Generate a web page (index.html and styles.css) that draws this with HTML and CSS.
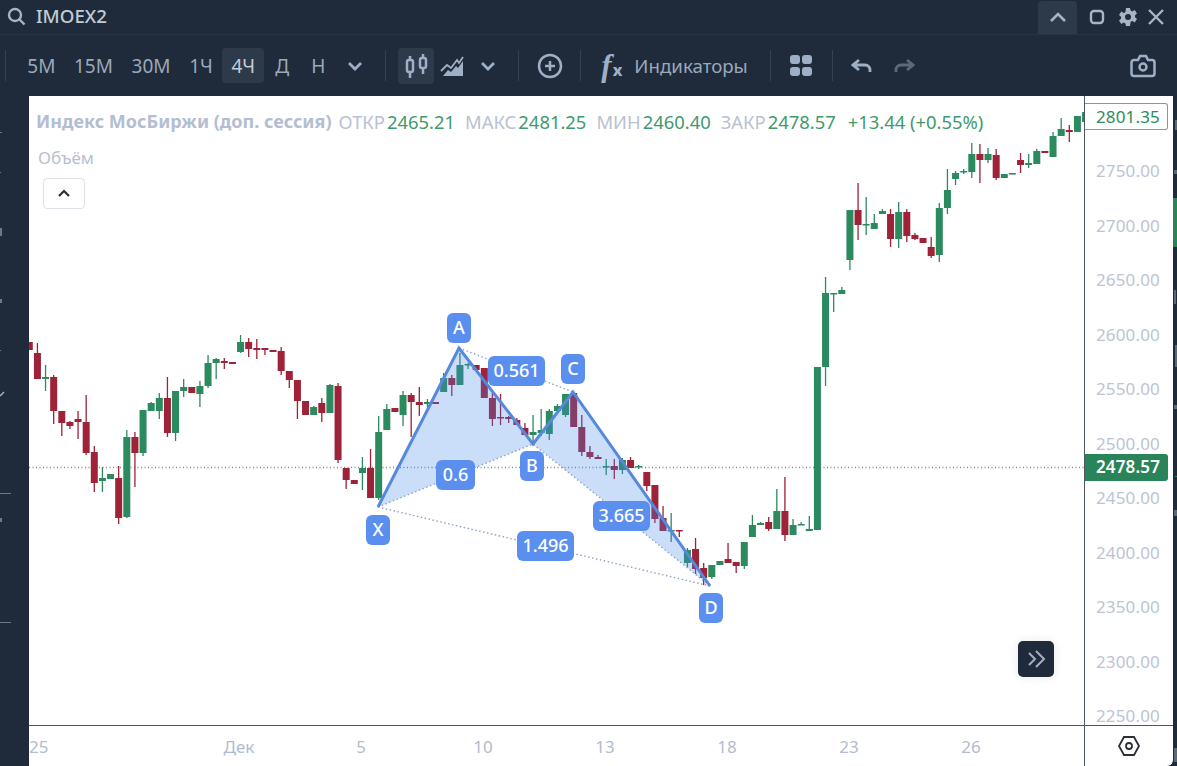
FILE: index.html
```html
<!DOCTYPE html>
<html lang="ru">
<head>
  <meta charset="UTF-8">
  <title>IMOEX2</title>
  <link rel="stylesheet" href="styles.css">
</head>
<body>
  <header class="topbar">
    <svg class="search-icon" width="20" height="20" viewBox="0 0 20 20"><circle cx="8" cy="8" r="6" /><path d="M12.500 12.500l5 5" /></svg>
    <span class="ticker">IMOEX2</span>
    <div class="window-btns">
      <button class="collapse-tab"><svg width="18" height="12" viewBox="0 0 18 12"><path d="M2 10l7-7 7 7" /></svg></button>
      <svg class="win-icon win-square" width="16" height="16" viewBox="0 0 16 16"><rect x="2" y="2" width="12" height="12" rx="3" /></svg>
      <svg class="win-gear" width="20" height="20" viewBox="0 0 20 20"><path class="gear-teeth" d="M8 1h4l.6 2.6 1.8.8L16.700 3l2.300 3.400-2 1.800v2l2 1.800-2.300 3.400-2.300-1.400-1.800.8L12 19H8l-.6-2.600-1.800-.8L3.300 17 1 13.600l2-1.800v-2L1 8l2.300-3.400 2.300 1.400 1.800-.8z" /><circle class="gear-hole" cx="10" cy="10" r="3" /></svg>
      <svg class="win-icon win-close" width="18" height="18" viewBox="0 0 18 18"><path d="M2 2l14 14M16 2L2 16" /></svg>
    </div>
  </header>

  <nav class="toolbar">
    <span class="sep sep-first"></span>
    <div class="timeframes">
      <button class="tf">5M</button>
      <button class="tf">15M</button>
      <button class="tf">30M</button>
      <button class="tf">1Ч</button>
      <button class="tf active">4Ч</button>
      <button class="tf tf-wide">Д</button>
      <button class="tf tf-wide">Н</button>
    </div>
    <button class="icon-btn chevron-btn"><svg width="16" height="10" viewBox="0 0 16 10"><path d="M2 2l6 6 6-6" /></svg></button>
    <span class="sep"></span>
    <button class="icon-btn chart-type active">
      <svg width="28" height="32" viewBox="0 0 28 32"><path d="M8 6v4M8 22v6M21 4v4M21 18v6" /><rect x="5" y="10" width="6" height="12" rx="2" /><rect x="18" y="8" width="6" height="10" rx="2" /></svg>
    </button>
    <button class="icon-btn area-btn">
      <svg width="24" height="22" viewBox="0 0 24 22"><path class="area-fill" d="M3 21l5-6 3 2 5-6 2 2 5-7v15z" /><path class="area-stroke" d="M1 16l6-6 4 3 6-8 2 3 4-6" /></svg>
    </button>
    <button class="icon-btn chevron-btn"><svg width="16" height="10" viewBox="0 0 16 10"><path d="M2 2l6 6 6-6" /></svg></button>
    <span class="sep"></span>
    <button class="icon-btn plus-btn"><svg width="26" height="26" viewBox="0 0 26 26"><circle cx="13" cy="13" r="11" /><path d="M13 8v10M8 13h10" /></svg></button>
    <span class="sep"></span>
    <button class="indicators"><span class="fx"><i>f</i><b>x</b></span><span>Индикаторы</span></button>
    <span class="sep"></span>
    <button class="icon-btn layout-btn"><span class="squares"><i></i><i></i><i></i><i></i></span></button>
    <span class="sep"></span>
    <button class="icon-btn undo-btn"><svg width="22" height="16" viewBox="0 0 22 16"><path d="M8 2L2 7l6 5M2 7h12c3 0 5 2 5 5v2" /></svg></button>
    <button class="icon-btn redo-btn"><svg width="22" height="16" viewBox="0 0 22 16"><path d="M14 2l6 5-6 5M20 7H8c-3 0-5 2-5 5v2" /></svg></button>
    <button class="icon-btn camera-btn"><svg width="26" height="24" viewBox="0 0 26 24"><path d="M4 6h4l2-4h6l2 4h4a2.500 2.500 0 0 1 2.500 2.500v11A2.500 2.500 0 0 1 22 22H4a2.500 2.500 0 0 1-2.500-2.500v-11A2.500 2.500 0 0 1 4 6z" /><circle cx="13" cy="13" r="3.500" /></svg></button>
  </nav>

  <main class="workspace">
    <svg class="left-strip" width="29" height="670" viewBox="0 96 29 670">
      <rect x="0" y="132" width="2" height="1" />
      <rect x="0" y="172" width="1" height="1" />
      <rect x="0" y="228" width="2" height="8" />
      <rect x="0" y="299" width="2" height="4" />
      <rect x="0" y="350" width="1" height="1" />
      <path d="M0 396l4-4" />
      <rect x="0" y="493" width="11" height="1" />
      <rect x="0" y="518" width="2" height="4" />
      <rect x="0" y="622" width="11" height="1" />
    </svg>

    <section class="chart-panel">
      <div class="chart-row">
        <div class="plot">
          <svg class="plot-svg" width="1055" height="629" viewBox="29 96 1055 629">
            <line class="last-line" x1="29" y1="467.500" x2="1084" y2="467.500" />
            <g id="candles"></g>
            <path class="pattern-fill" d="M378 507L459 348L533 444Z" />
            <path class="pattern-fill" d="M533 444L573 392L710 586Z" />
            <path class="pattern-dots" d="M378 507L533 444L710 586M459 348L573 392M378 507L710 586" />
            <path class="pattern-line" d="M378 507L459 348L533 444L573 392L710 586" />
            <g class="pattern-label">
              <rect x="447" y="313" width="24" height="30" rx="6" /><text x="459" y="334">A</text>
              <rect x="561" y="354" width="24" height="30" rx="6" /><text x="573" y="375">C</text>
              <rect x="520" y="451" width="24" height="30" rx="6" /><text x="532" y="472">B</text>
              <rect x="366" y="515" width="24" height="30" rx="6" /><text x="378" y="536">X</text>
              <rect x="699" y="593" width="24" height="30" rx="6" /><text x="711" y="614">D</text>
              <rect x="488" y="356" width="57" height="30" rx="6" /><text x="516.500" y="377">0.561</text>
              <rect x="436" y="460" width="39" height="30" rx="6" /><text x="455.500" y="481">0.6</text>
              <rect x="517" y="531" width="57" height="30" rx="6" /><text x="545.500" y="552">1.496</text>
              <rect x="593" y="501" width="57" height="30" rx="6" /><text x="621.500" y="522">3.665</text>
            </g>
          </svg>

          <div class="legend">
            <div class="legend-line">
              <span class="legend-title">Индекс МосБиржи (доп. сессия)</span>
              <span class="ohlc"><span>ОТКР</span><b>2465.21</b></span>
              <span class="ohlc"><span>МАКС</span><b>2481.25</b></span>
              <span class="ohlc"><span>МИН</span><b>2460.40</b></span>
              <span class="ohlc"><span>ЗАКР</span><b>2478.57</b></span>
              <b class="change">+13.44 (+0.55%)</b>
            </div>
            <div class="legend-volume">Объём</div>
            <button class="legend-toggle"><svg width="14" height="9" viewBox="0 0 14 9"><path d="M2 7l5-5 5 5" /></svg></button>
          </div>

          <button class="scroll-end"><svg width="20" height="18" viewBox="0 0 20 18"><path d="M3 3l6 6-6 6M10 1l8 8-8 8" /></svg></button>
        </div>

        <div class="price-axis">
          <span>2750.00</span>
          <span>2700.00</span>
          <span>2650.00</span>
          <span>2600.00</span>
          <span>2550.00</span>
          <span>2500.00</span>
          <span>2450.00</span>
          <span>2400.00</span>
          <span>2350.00</span>
          <span>2300.00</span>
          <span>2250.00</span>
          <div class="price-tag tag-high">2801.35</div>
          <div class="price-tag tag-last">2478.57</div>
        </div>
      </div>

      <div class="axis-row">
        <div class="time-axis">
          <span class="tick-first">25</span>
          <span class="tick">Дек</span>
          <span class="tick">5</span>
          <span class="tick">10</span>
          <span class="tick">13</span>
          <span class="tick">18</span>
          <span class="tick">23</span>
          <span class="tick">26</span>
        </div>
        <div class="axis-corner"><svg width="24" height="22" viewBox="0 0 24 22"><path d="M7 2h10l5 9-5 9H7l-5-9z" /><circle cx="12" cy="11" r="3" /></svg></div>
      </div>
    </section>

    <svg class="right-strip" width="4" height="670" viewBox="1173 96 4 670">
      <rect class="bit-green" x="1173" y="198" width="4" height="49" />
      <rect class="bit-grey" x="1175" y="120" width="2" height="10" />
      <rect class="bit-grey" x="1174" y="170" width="3" height="4" />
      <rect class="bit-grey" x="1174" y="290" width="2" height="14" />
      <rect class="bit-grey" x="1175" y="345" width="2" height="22" />
      <rect class="bit-grey" x="1174" y="405" width="3" height="4" />
      <rect class="bit-green" x="1175" y="476" width="2" height="1" />
      <rect class="bit-grey" x="1174" y="510" width="3" height="6" />
      <rect class="bit-grey" x="1174" y="748" width="3" height="14" />
    </svg>
  </main>

  <script>
    // [colour, high, body top, body bottom, low], one per bar
    const bars = [
      ['r',342,342,350,350],['r',343,353,379,379],['g',365,377,379,391],['r',375,377,411,424],
      ['r',411,411,423,436],['r',421,422,426,429],['r',411,419,422,439],['r',395,422,453,455],
      ['r',446,452,483,492],['g',467,478,481,492],['g',474,474,479,479],['r',466,478,518,524],
      ['g',430,437,517,518],['r',432,437,453,487],['g',410,410,453,456],['g',402,403,411,411],
      ['g',393,398,411,419],['r',377,398,433,437],['g',391,391,433,441],['g',379,387,391,397],
      ['r',387,387,393,393],['g',381,386,394,407],['g',355,363,386,388],['g',358,359,363,379],
      ['r',358,361,363,369],['r',362,362,364,364],['g',335,342,352,353],['r',338,342,349,357],
      ['r',339,348,350,359],['r',348,348,350,355],['r',350,350,352,352],['r',347,351,371,375],
      ['r',371,371,380,388],['r',380,380,401,419],['r',401,401,415,415],['g',406,407,415,415],
      ['r',398,403,413,422],['g',384,385,413,413],['r',383,386,460,463],['r',468,468,480,489],
      ['r',480,480,484,484],['g',457,468,473,490],['r',449,468,498,498],['g',416,432,498,500],
      ['g',404,409,430,430],['r',408,408,412,412],['g',391,395,415,426],['r',393,395,402,437],
      ['r',387,402,405,416],['g',399,402,404,407],['r',402,402,404,404],['g',373,378,392,392],
      ['r',375,378,385,396],['g',353,365,385,385],['g',363,364,365,369],['r',365,365,370,370],
      ['r',368,368,398,398],['r',393,398,419,426],['r',394,417,418,425],['r',416,417,419,423],
      ['r',418,420,425,425],['r',423,428,435,435],['g',415,432,435,443],['g',409,430,433,436],
      ['g',409,411,434,440],['g',404,406,411,411],['g',394,394,415,417],['r',392,393,427,427],
      ['r',415,427,452,456],['r',446,452,457,459],['r',455,457,459,459],['g',459,466,467,475],
      ['r',459,466,470,479],['g',458,460,470,474],['r',457,460,468,468],['g',465,466,467,469],
      ['r',472,472,486,491],['r',485,485,519,523],['r',506,518,531,531],['g',513,530,531,542],
      ['r',530,530,531,537],['g',548,550,563,567],['r',538,549,569,574],['r',563,568,578,585],
      ['g',565,565,577,579],['g',561,561,565,565],['r',543,559,563,563],['r',562,562,566,573],
      ['g',542,542,566,569],['g',515,525,537,537],['g',522,523,525,525],['r',517,522,529,531],
      ['g',489,511,529,529],['r',477,511,535,541],['g',519,525,535,535],['g',522,524,525,525],
      ['g',516,529,531,531],['g',367,367,530,530],['g',277,293,367,386],['g',293,293,294,312],
      ['g',287,290,294,294],['g',210,210,260,270],['r',183,210,225,240],['g',197,224,225,235],
      ['g',214,223,229,229],['g',209,211,214,214],['r',209,214,239,247],['g',202,212,239,248],
      ['r',209,212,236,242],['r',233,235,239,240],['r',238,238,243,243],['r',237,247,256,258],
      ['g',203,208,255,262],['g',169,190,208,214],['g',171,173,179,185],['g',169,171,172,174],
      ['g',143,154,172,178],['r',144,154,160,183],['g',148,154,160,163],['r',149,155,178,180],
      ['g',174,174,178,178],['g',173,173,174,174],['r',153,160,165,173],['g',154,163,165,168],
      ['g',149,151,164,164],['r',151,151,153,153],['g',132,136,157,157],['g',118,129,136,136],
      ['r',125,130,132,142],['g',116,116,132,132],['g',112,112,122,122]
    ];

    const NS = 'http://www.w3.org/2000/svg';
    const group = document.getElementById('candles');

    function addRect(cls, x, y, w, h) {
      const rect = document.createElementNS(NS, 'rect');
      rect.setAttribute('class', cls);
      rect.setAttribute('x', x);
      rect.setAttribute('y', y);
      rect.setAttribute('width', w);
      rect.setAttribute('height', Math.max(h, 1.5));
      group.appendChild(rect);
    }

    bars.forEach(function (bar, i) {
      const x = 29.3 + 8.125 * i;
      const cls = bar[0] === 'g' ? 'up' : 'down';
      addRect(cls, x - 0.65, bar[1], 1.3, bar[4] - bar[1]);
      addRect(cls, x - 3.5, bar[2], 7, bar[3] - bar[2]);
    });
  </script>
</body>
</html>
```

FILE: styles.css
```css
* {
  box-sizing: border-box;
}

html,
body {
  height: 100%;
}

body {
  margin: 0;
  overflow: hidden;
  background: #1f2b3a;
  font-family: "Noto Sans", sans-serif;
}

button {
  border: none;
  padding: 0;
  background: none;
  font-family: inherit;
  color: inherit;
}

svg {
  display: block;
}

/* top bar */

.topbar {
  display: flex;
  align-items: center;
  height: 35px;
  padding-left: 7px;
  border-bottom: 1px solid #263443;
}

.search-icon {
  fill: none;
  stroke: #a9b4c3;
  stroke-width: 2.4;
}

.ticker {
  margin-top: -3px;
  margin-left: 9px;
  font-size: 18.700px;
  font-weight: 500;
  color: #c3cbd6;
}

.window-btns {
  display: flex;
  align-items: center;
  height: 34px;
  margin-left: auto;
  margin-right: 12px;
}

.collapse-tab {
  display: flex;
  align-items: center;
  justify-content: center;
  width: 39px;
  height: 33px;
  border-radius: 4px 4px 0 0;
  background: #2d3a49;
}

.collapse-tab path {
  fill: none;
  stroke: #a9b4c3;
  stroke-width: 2.6;
}

.win-icon {
  fill: none;
  stroke: #a9b4c3;
  stroke-width: 2.4;
}

.win-square {
  margin-left: 12px;
}

.win-gear {
  margin-left: 13px;
}

.gear-teeth {
  fill: #a9b4c3;
}

.gear-hole {
  fill: #1f2b3a;
}

.win-close {
  margin-left: 9px;
}

/* toolbar */

.toolbar {
  display: flex;
  align-items: center;
  height: 61px;
  padding-left: 5px;
  color: #9ba8ba;
}

.sep {
  flex: none;
  width: 1px;
  height: 31px;
  background: #36434f;
}

.timeframes {
  display: flex;
  margin-left: 12px;
}

.tf {
  height: 35px;
  padding: 0 9.300px;
  border-radius: 4px;
  font-size: 19px;
  color: #9ba8ba;
}

.tf-wide {
  padding: 0 11px;
}

.tf.active {
  background: #2d3a49;
  color: #c3cbd6;
}

.icon-btn {
  display: flex;
  flex: none;
  align-items: center;
  justify-content: center;
}

.icon-btn path,
.icon-btn rect,
.icon-btn circle {
  fill: none;
  stroke: #9fb0c6;
  stroke-width: 2.500;
}

.chevron-btn {
  width: 26px;
  height: 35px;
}

.chevron-btn path {
  stroke-width: 2.800;
}

.timeframes + .chevron-btn {
  margin-left: 6px;
  margin-right: 17px;
}

.chart-type {
  width: 36px;
  height: 36px;
  margin-left: 12px;
  border-radius: 4px;
}

.chart-type.active {
  background: #2d3a49;
}

.area-btn {
  width: 24px;
  margin-left: 6px;
}

.icon-btn .area-fill {
  fill: #9fb0c6;
  stroke: none;
}

.icon-btn .area-stroke {
  stroke-width: 1.800;
}

.area-btn + .chevron-btn {
  margin-left: 11px;
  margin-right: 17px;
}

.plus-btn {
  width: 26px;
  margin: 0 17px 0 18px;
}

.indicators {
  display: flex;
  align-items: center;
  margin-left: 20px;
  margin-right: 22px;
  font-size: 18.700px;
  color: #9ba8ba;
}

.fx {
  display: flex;
  align-items: baseline;
  width: 33px;
  color: #9fb0c6;
}

.fx i {
  font-family: "Liberation Serif", serif;
  font-size: 31px;
  font-weight: 700;
  line-height: 1;
}

.fx b {
  margin-left: 1px;
  font-size: 16px;
  font-weight: 800;
}

.layout-btn {
  width: 22px;
  margin: 0 20px 0 19px;
}

.squares {
  display: grid;
  grid-template-columns: 9.500px 9.500px;
  gap: 2.500px;
}

.squares i {
  height: 9.500px;
  border-radius: 3px;
  background: #9fb0c6;
}

.undo-btn {
  width: 22px;
  margin-left: 18px;
}

.undo-btn path,
.redo-btn path {
  stroke-width: 2.800;
}

.redo-btn {
  width: 22px;
  margin-left: 20px;
}

.redo-btn path {
  stroke: #5b697b;
}

.camera-btn {
  width: 26px;
  margin-left: auto;
  margin-right: 21px;
}

/* chart */

.workspace {
  display: flex;
  height: 670px;
}

.left-strip {
  flex: none;
  fill: #6b7888;
  stroke: none;
}

.left-strip path {
  fill: none;
  stroke: #a9b4c3;
  stroke-width: 1.500;
}

.right-strip {
  flex: none;
}

.bit-green {
  fill: #2a8459;
}

.bit-grey {
  fill: #5b6877;
}

.chart-panel {
  display: flex;
  flex: none;
  flex-direction: column;
  width: 1144px;
  border-bottom-right-radius: 6px;
  background: #fff;
}

.chart-row {
  display: flex;
  height: 630px;
  border-bottom: 1px solid #4d5560;
}

.plot {
  position: relative;
  flex: none;
  width: 1055px;
  overflow: hidden;
}

.last-line {
  stroke: #7d8c85;
  stroke-width: 1.300;
  stroke-dasharray: 1 2.500;
}

.up {
  fill: #2c8a5f;
}

.down {
  fill: #9e2238;
}

.pattern-fill {
  fill: rgba(70, 135, 235, 0.28);
}

.pattern-dots {
  fill: none;
  stroke: #8ea3c5;
  stroke-width: 1.400;
  stroke-dasharray: 1.500 2.500;
}

.pattern-line {
  fill: none;
  stroke: #5688dc;
  stroke-width: 3;
}

.pattern-label rect {
  fill: #5a8ff0;
}

.pattern-label text {
  font-family: "Noto Sans", sans-serif;
  font-size: 18px;
  font-weight: 500;
  text-anchor: middle;
  fill: #fff;
}

.legend {
  position: absolute;
  top: 12px;
  left: 7px;
}

.legend-line {
  display: flex;
  align-items: center;
  height: 26px;
  font-size: 18.400px;
  white-space: nowrap;
  color: #b9c1d1;
}

.legend-title {
  margin-right: 7px;
  font-size: 18px;
  font-weight: 700;
  color: #b4bdd2;
}

.ohlc {
  margin-right: 10px;
}

.ohlc b,
.change {
  margin-left: 2px;
  font-weight: 400;
  color: #3f9a6e;
}

.legend-volume {
  margin-top: 12px;
  margin-left: 2px;
  font-size: 17px;
  color: #b8c0ce;
}

.legend-toggle {
  display: flex;
  align-items: center;
  justify-content: center;
  width: 42px;
  height: 31px;
  margin-top: 9px;
  margin-left: 7px;
  border: 1px solid #dfe2e8;
  border-radius: 4px;
  background: #fff;
}

.legend-toggle path {
  fill: none;
  stroke: #2a2e36;
  stroke-width: 2.200;
}

.scroll-end {
  position: absolute;
  top: 545px;
  left: 989px;
  display: flex;
  align-items: center;
  justify-content: center;
  width: 36px;
  height: 36px;
  border-radius: 5px;
  background: #1f2b3a;
  box-shadow: 0 0 10px rgba(31, 43, 58, 0.1);
}

.scroll-end path {
  fill: none;
  stroke: #9fb0c6;
  stroke-width: 2;
}

.price-axis {
  position: relative;
  display: flex;
  flex: 1;
  flex-direction: column;
  align-items: flex-start;
  padding-top: 48px;
  padding-left: 11px;
  border-left: 1px solid #4d5560;
  font-size: 17px;
  letter-spacing: 0.150px;
  color: #bcc4d4;
}

.price-axis span {
  flex: none;
  height: 54.500px;
  line-height: 54.500px;
}

.price-tag {
  position: absolute;
  left: 0;
  width: 83px;
  height: 27px;
  padding-left: 11px;
  border-radius: 0 3px 3px 0;
  line-height: 25px;
}

.tag-high {
  top: 7px;
  border: 1px solid #6aa98c;
  border-left: none;
  background: #fff;
  color: #2f8a60;
}

.tag-last {
  top: 358px;
  background: #2a8459;
  font-weight: 600;
  color: #fff;
}

.axis-row {
  display: flex;
  flex: 1;
}

.time-axis {
  display: flex;
  flex: none;
  align-items: center;
  width: 1055px;
  font-size: 17px;
  color: #b2bccf;
}

.tick-first {
  flex: none;
  width: 149px;
}

.tick {
  flex: none;
  width: 122px;
  text-align: center;
}

.axis-corner {
  display: flex;
  flex: 1;
  align-items: center;
  justify-content: center;
  border-left: 1px solid #4d5560;
}

.axis-corner path,
.axis-corner circle {
  fill: none;
  stroke: #2a2e36;
  stroke-width: 1.800;
}
```
